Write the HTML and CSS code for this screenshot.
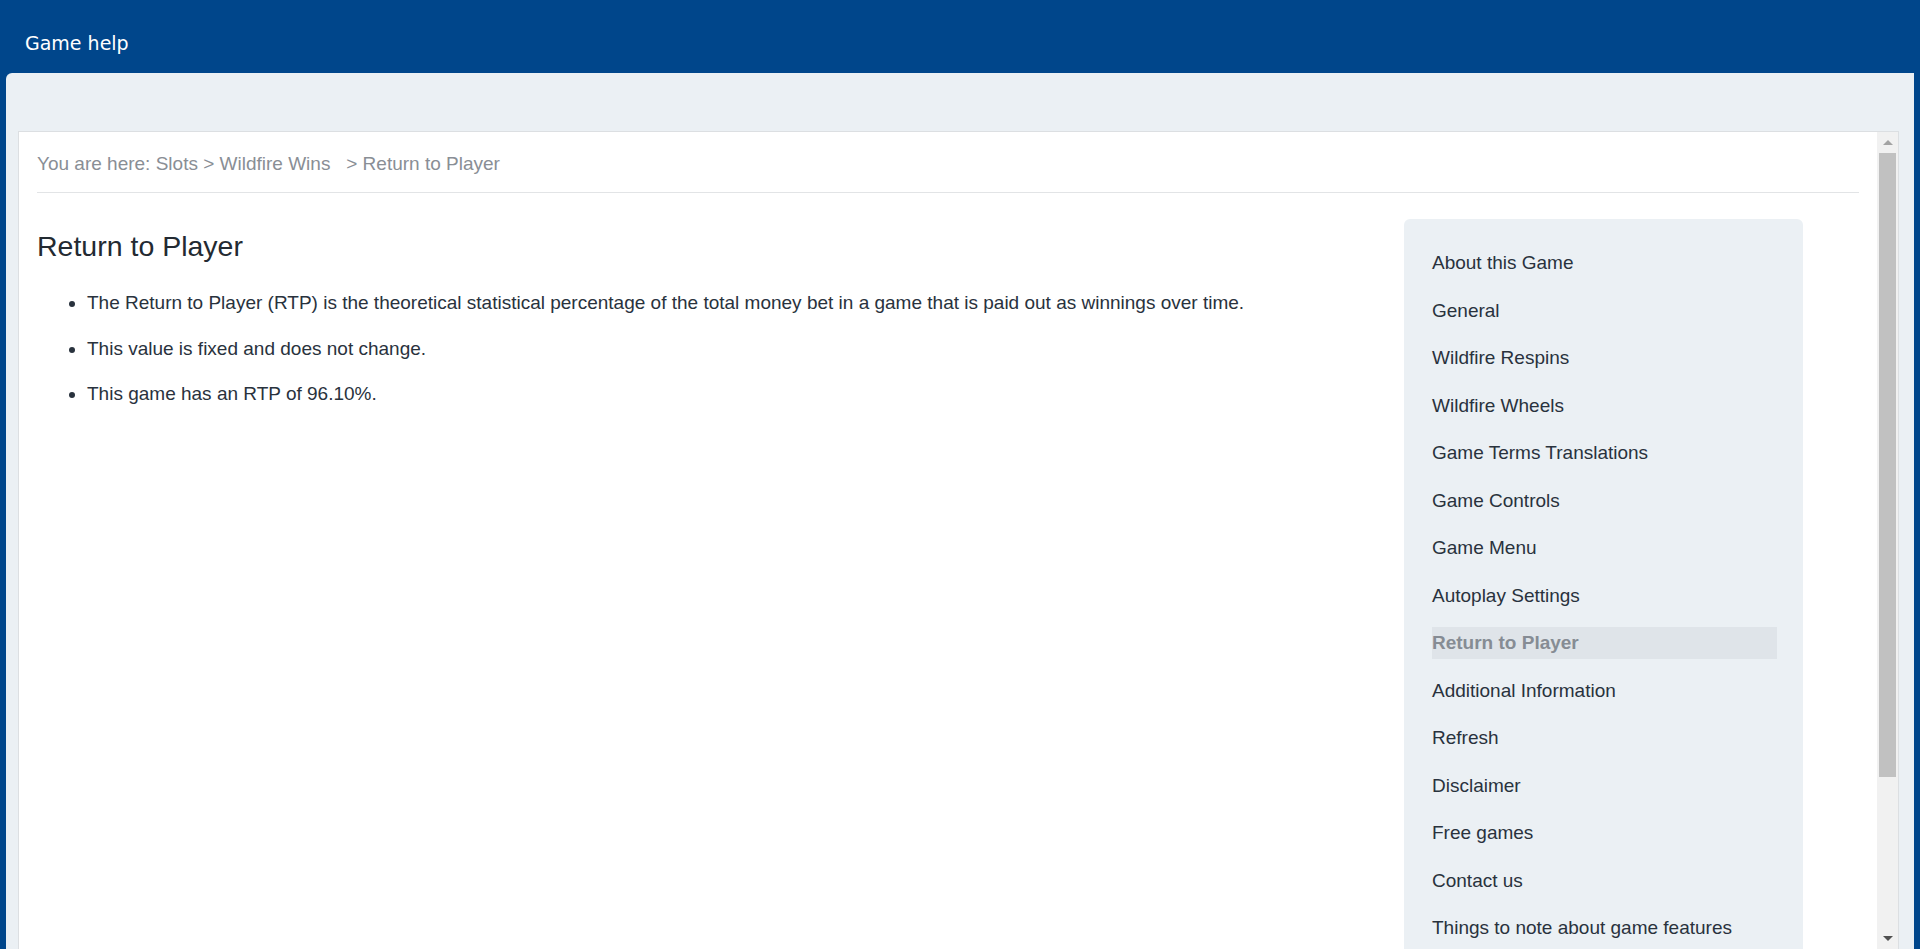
FILE: index.html
```html
<!DOCTYPE html>
<html lang="en">
<head>
    <meta charset="UTF-8">
    <meta name="viewport" content="width=device-width, initial-scale=1.0">
    <title>Game help</title>
    <link rel="stylesheet" href="styles.css">
</head>
<body>
    <header class="topbar">
        <span class="topbar-title">Game help</span>
    </header>

    <div class="panel">
        <div class="help-frame">
            <div class="help-page">
                <!-- Breadcrumb -->
                <div class="breadcrumb">You are here: Slots &gt; Wildfire Wins &nbsp; &gt; Return to Player</div>

                <div class="help-body">
                    <div class="article">
                        <h1>Return to Player</h1>
                        <ul>
                            <li>The Return to Player (RTP) is the theoretical statistical percentage of the total money bet in a game that is paid out as winnings over time.</li>
                            <li>This value is fixed and does not change.</li>
                            <li>This game has an RTP of 96.10%.</li>
                        </ul>
                    </div>

                    <!-- Table of contents -->
                    <nav class="toc">
                        <a href="#">About this Game</a>
                        <a href="#">General</a>
                        <a href="#">Wildfire Respins</a>
                        <a href="#">Wildfire Wheels</a>
                        <a href="#">Game Terms Translations</a>
                        <a href="#">Game Controls</a>
                        <a href="#">Game Menu</a>
                        <a href="#">Autoplay Settings</a>
                        <a href="#" class="active">Return to Player</a>
                        <a href="#">Additional Information</a>
                        <a href="#">Refresh</a>
                        <a href="#">Disclaimer</a>
                        <a href="#">Free games</a>
                        <a href="#">Contact us</a>
                        <a href="#">Things to note about game features</a>
                    </nav>
                </div>
            </div>

            <div class="scrollbar">
                <div class="scroll-btn up"></div>
                <div class="scroll-track"><div class="scroll-thumb"></div></div>
                <div class="scroll-btn down"></div>
            </div>
        </div>
    </div>
</body>
</html>
```

FILE: styles.css
```css
html, body {
    height: 100%;
}

body {
    margin: 0;
    overflow: hidden;
    display: flex;
    flex-direction: column;
    background-color: #00468b;
    font-family: "Liberation Sans", Arial, sans-serif;
}

.topbar {
    height: 73px;
    flex-shrink: 0;
    box-sizing: border-box;
    padding: 31px 25px 0;
}

.topbar-title {
    font-family: "DejaVu Sans", Verdana, sans-serif;
    font-size: 19px;
    line-height: 24px;
    color: #fff;
}

.panel {
    flex: 1;
    min-height: 0;
    display: flex;
    margin: 0 6px;
    padding: 58px 15px 0 12px;
    background-color: #ebf0f4;
    border-top-left-radius: 6px;
}

.help-frame {
    flex: 1;
    display: flex;
    min-width: 0;
    background-color: #fff;
    border: 1px solid #dcdfe2;
    border-bottom: none;
    overflow: hidden;
}

.help-page {
    flex: 1;
    min-width: 0;
    overflow: hidden;
}

.breadcrumb {
    margin: 0 18px;
    padding: 18px 0 15px;
    border-bottom: 1px solid #e2e4e6;
    font-size: 19px;
    line-height: 27px;
    color: #898e95;
}

.help-body {
    display: flex;
    align-items: flex-start;
    padding: 0 18px;
}

.article {
    flex: 1;
}

.article h1 {
    margin: 36px 0 0;
    font-size: 28.5px;
    font-weight: normal;
    line-height: 34px;
    color: #232a32;
}

.article ul {
    margin: 26px 0 0;
    padding-left: 50px;
}

.article li {
    font-size: 19px;
    line-height: 27px;
    margin-bottom: 18.5px;
    color: #29323d;
}

.toc {
    width: 399px;
    box-sizing: border-box;
    margin: 26px 56px 0 0;
    padding: 28px 26px 20px 28px;
    background-color: #ebf0f4;
    border-radius: 6px;
}

.toc a {
    display: block;
    font-size: 19px;
    line-height: 32px;
    margin-bottom: 15.5px;
    color: #29323d;
    text-decoration: none;
}

.toc a.active {
    background-color: #dfe4e9;
    font-weight: bold;
    color: #868c94;
}

/* fake scrollbar of the help frame */
.scrollbar {
    width: 21px;
    flex-shrink: 0;
    display: flex;
    flex-direction: column;
    background-color: #f1f1f1;
}

.scroll-btn {
    height: 21px;
    display: flex;
    align-items: center;
    justify-content: center;
}

.scroll-btn.up::before {
    content: "";
    border-left: 5px solid transparent;
    border-right: 5px solid transparent;
    border-bottom: 5px solid #a3a3a3;
}

.scroll-btn.down::before {
    content: "";
    border-left: 5px solid transparent;
    border-right: 5px solid transparent;
    border-top: 5px solid #505050;
}

.scroll-track {
    flex: 1;
    padding: 0 2px;
}

.scroll-thumb {
    height: 624px;
    background-color: #c1c1c1;
}
```
